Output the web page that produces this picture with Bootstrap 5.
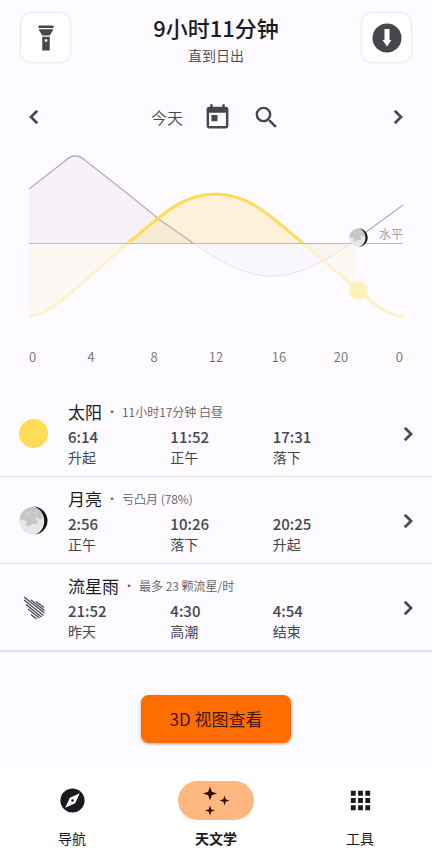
<!DOCTYPE html>
<html lang="zh-CN">
<head>
<meta charset="utf-8">
<meta name="viewport" content="width=device-width, initial-scale=1">
<title>天文学</title>
<link href="https://cdn.jsdelivr.net/npm/bootstrap@5.3.0/dist/css/bootstrap.min.css" rel="stylesheet">
<style>
  body { background: #fdfbff; color: #1b1b1f; font-family: "Noto Sans CJK SC", sans-serif; }
  svg { display: block; flex-shrink: 0; }
  .bare { background: none; border: 0; padding: 0; color: inherit; }
  .ink { color: #46464d; }
  .top-bar { padding: 13px 21px 0; }
  .tile-btn { width: 49px; height: 49px; border-radius: 10px; box-shadow: 0 0 3px rgba(0,0,0,.18); }
  .headline { font-size: 22px; line-height: 28px; font-weight: 500; }
  .subline { font-size: 14px; line-height: 28px; font-weight: 350; }
  .date-bar { padding: 32px 20px 0; }
  .date-tools { gap: 20px; }
  .day-label { font-size: 16px; line-height: 32px; font-weight: 350; }
  .chart-wrap { padding: 12px 29px 22px; }
  .chart-wrap svg { width: 100%; height: auto; overflow: visible; }
  .axis-text { font-size: 13px; fill: #6f6f74; font-weight: 350; }
  .horizon-text { font-size: 12px; fill: #a5a5a9; }
  .body-row { padding: 10px 10px 9px 19px; border-bottom: 1px solid #dcdbdf; color: #46464d; }
  .body-row:hover { color: #46464d; }
  .body-row:last-child { border-bottom: 2px solid #e2e1e5; }
  .body-main { margin-left: 20px; }
  .body-name { font-size: 17px; line-height: 24px; color: #1b1b1f; }
  .body-note { font-size: 12px; color: #5c5c62; font-weight: 350; gap: 4px; margin-left: 4px; }
  .times { margin-top: 3px; line-height: 20px; font-size: 14px; }
  .clock { font-size: 15px; font-weight: 500; }
  .row-arrow { width: 28px; margin-left: 19px; }
  .cta { padding: 43px 0 24px; }
  .view-btn { min-width: 150px; height: 48px; border-radius: 8px; font-size: 17px; color: #43160a; background: #ff6d00; box-shadow: 0 1px 3px rgba(0,0,0,.35); }
  .view-btn:hover { background: #f26700; color: #43160a; }
  .tab-bar { background: #fff; padding: 14px 0 14px; }
  .tab-link { color: #1b1b1f; font-size: 14px; line-height: 22px; gap: 7px; }
  .pill { width: 76px; height: 39px; }
  .pill-on { background: #ffb780; color: #2f0f08; }
</style>
<script src="https://cdn.jsdelivr.net/npm/bootstrap@5.3.0/dist/js/bootstrap.bundle.min.js"></script>
</head>
<body>
<svg width="0" height="0" class="position-absolute" aria-hidden="true">
  <symbol id="next" viewBox="0 0 24 24"><path fill="currentColor" stroke="currentColor" stroke-width=".4" d="M8.59 16.59 10 18l6-6-6-6-1.41 1.41L13.17 12z"/></symbol>
  <symbol id="moon" viewBox="0 0 30 30">
    <circle cx="15" cy="15" r="14.5" fill="#e6e8e7"/>
    <path d="M3 7C6 3 11 .5 16 1.200c3 1 5 3 7 5l1 4-1 4-3-1-2-2-1 2 3 3-2 3-4-1-2 2-3 1-2-2 1-3-4-2-3 1C1 12 1 9 3 7z" fill="#c6c6c7"/>
    <path d="M9 6l3 1-1 3-3 1zM17 5l3 2-1 2-3-1z" fill="#d0d0d0"/>
    <path d="M15 .5C29 4 30 26 16 29.500c8-.5 13.500-7 13.500-14.500S23 .7 15 .5z" fill="#17171b"/>
  </symbol>
</svg>
<div class="d-flex flex-column min-vh-100">
  <header class="top-bar d-flex justify-content-between align-items-start">
    <button type="button" class="tile-btn bare ink d-flex align-items-center justify-content-center bg-white" aria-label="手电筒">
      <svg width="30" height="30" viewBox="0 0 24 24" fill="currentColor"><path d="M9 10 6 5h12l-3 5H9M18 4H6V2h12v2M9 22V11h6v11H9m2-9v2h2v-2z"/></svg>
    </button>
    <div class="text-center">
      <h1 class="headline m-0">9小时11分钟</h1>
      <div class="subline ink">直到日出</div>
    </div>
    <button type="button" class="tile-btn bare ink d-flex align-items-center justify-content-center bg-white" aria-label="下载">
      <svg width="30" height="30" viewBox="0 0 30 30"><circle cx="15" cy="15" r="14.500" fill="currentColor"/><path d="M12.500 6h5v11h2L15 23.500 10.500 17h2z" fill="#fff"/></svg>
    </button>
  </header>

  <div class="date-bar ink d-flex justify-content-between align-items-center">
    <button type="button" class="bare" aria-label="前一天"><svg width="28" height="28" viewBox="0 0 24 24"><path fill="currentColor" stroke="currentColor" stroke-width=".4" d="M15.410 7.410 14 6l-6 6 6 6 1.410-1.410L10.830 12z"/></svg></button>
    <div class="date-tools d-flex align-items-center">
      <span class="day-label">今天</span>
      <button type="button" class="bare" aria-label="选择日期"><svg width="29" height="29" viewBox="0 0 24 24" fill="currentColor"><path d="M7 10h5v5H7m12 4H5V8h14m0-5h-1V1h-2v2H8V1H6v2H5c-1.110 0-2 .9-2 2v14a2 2 0 0 0 2 2h14a2 2 0 0 0 2-2V5a2 2 0 0 0-2-2z"/></svg></button>
      <button type="button" class="bare" aria-label="搜索"><svg width="29" height="29" viewBox="0 0 24 24" fill="currentColor"><path d="M15.500 14h-.79l-.28-.27A6.471 6.471 0 0 0 16 9.500 6.500 6.500 0 1 0 9.500 16c1.610 0 3.090-.59 4.230-1.570l.27.28v.79l5 4.990L20.490 19l-4.990-5zm-6 0C7.010 14 5 11.990 5 9.500S7.010 5 9.500 5 14 7.010 14 9.500 11.990 14 9.500 14z"/></svg></button>
    </div>
    <button type="button" class="bare" aria-label="后一天"><svg width="28" height="28"><use href="#next"/></svg></button>
  </div>

  <div class="chart-wrap">
    <svg viewBox="0 0 374 223" role="img" aria-label="太阳与月亮高度">
      <!-- moon altitude -->
      <path d="M0 44 36 16Q46 6 57 16L99 49 131 75 164 98H0z" fill="#78465a" fill-opacity=".05"/>
      <path d="M164 98C196 120 219 131 242 131 270 131 297 116 322 98z" fill="#78465a" fill-opacity=".02"/>
      <!-- sun altitude -->
      <path d="M0 171C22 171 54 136 99 98H0zM274 98 329 145V98z" fill="#ffc830" fill-opacity=".06"/>
      <path d="M99 98C130 74 150 49 187 49 222 49 245 75 274 98z" fill="#ffc830" fill-opacity=".18"/>
      <path d="M0 44 36 16Q46 6 57 16L99 49 131 75 164 98" fill="none" stroke="#b1afb4" stroke-width="1.200"/>
      <path d="M164 98C196 120 219 131 242 131 270 131 297 116 322 98" fill="none" stroke="#e3e2e4"/>
      <path d="M322 98 374 60" stroke="#b1afb4" stroke-width="1.200"/>
      <path d="M0 171C22 171 54 136 99 98M274 98 329 145C345 159 358 170 374 172" fill="none" stroke="#fff2c8" stroke-width="3"/>
      <path d="M0 98.500H374" stroke="#bdbbbf" fill="none"/>
      <path d="M99 98C130 74 150 49 187 49 222 49 245 75 274 98" fill="none" stroke="#ffdc55" stroke-width="3"/>
      <circle cx="329.500" cy="145.500" r="9.500" fill="#fff0bc"/>
      <use href="#moon" x="320" y="83" width="19" height="19"/>
      <text class="horizon-text" x="374" y="94" text-anchor="end">水平</text>
      <g class="axis-text" text-anchor="middle">
        <text x="0" y="217" text-anchor="start">0</text>
        <text x="62" y="217">4</text>
        <text x="125" y="217">8</text>
        <text x="187" y="217">12</text>
        <text x="250" y="217">16</text>
        <text x="312" y="217">20</text>
        <text x="374" y="217" text-anchor="end">0</text>
      </g>
    </svg>
  </div>

  <main>
    <div>
      <a href="#sun" class="body-row d-flex align-items-center text-decoration-none">
        <svg width="29" height="29" viewBox="0 0 29 29"><circle cx="14.500" cy="14.500" r="14.500" fill="#ffdc55"/></svg>
        <div class="body-main flex-grow-1">
          <div class="body-name d-flex">太阳<span class="body-note d-flex"><span>·</span><span>11小时17分钟 白昼</span></span></div>
          <div class="times row g-0">
            <div class="col"><div class="clock">6:14</div>升起</div>
            <div class="col"><div class="clock">11:52</div>正午</div>
            <div class="col"><div class="clock">17:31</div>落下</div>
          </div>
        </div>
        <svg class="row-arrow" height="28"><use href="#next"/></svg>
      </a>
      <a href="#moon-details" class="body-row d-flex align-items-center text-decoration-none">
        <svg width="29" height="29"><use href="#moon"/></svg>
        <div class="body-main flex-grow-1">
          <div class="body-name d-flex">月亮<span class="body-note d-flex"><span>·</span><span>亏凸月 (78%)</span></span></div>
          <div class="times row g-0">
            <div class="col"><div class="clock">2:56</div>正午</div>
            <div class="col"><div class="clock">10:26</div>落下</div>
            <div class="col"><div class="clock">20:25</div>升起</div>
          </div>
        </div>
        <svg class="row-arrow" height="28"><use href="#next"/></svg>
      </a>
      <a href="#meteors" class="body-row d-flex align-items-center text-decoration-none">
        <svg width="29" height="29" viewBox="0 0 29 29" fill="none" stroke="#46464c" stroke-width="1.200"><path d="M5 4 25.500 20M12 7 25.500 17.500M17 8.500 25 14.500M5 7 24.500 22.500M7 11.500 22.500 24M9 16 20.500 25M12 21.500 17.500 26"/></svg>
        <div class="body-main flex-grow-1">
          <div class="body-name d-flex">流星雨<span class="body-note d-flex"><span>·</span><span>最多 23 颗流星/时</span></span></div>
          <div class="times row g-0">
            <div class="col"><div class="clock">21:52</div>昨天</div>
            <div class="col"><div class="clock">4:30</div>高潮</div>
            <div class="col"><div class="clock">4:54</div>结束</div>
          </div>
        </div>
        <svg class="row-arrow" height="28"><use href="#next"/></svg>
      </a>
    </div>
    <div class="cta text-center">
      <button type="button" class="btn view-btn border-0">3D 视图查看</button>
    </div>
  </main>

  <nav class="tab-bar row g-0 mt-auto" aria-label="主导航">
    <a href="#nav" class="tab-link col d-flex flex-column align-items-center text-decoration-none">
      <span class="pill d-flex align-items-center justify-content-center"><svg width="29" height="29" viewBox="0 0 24 24" fill="currentColor"><path d="M14.190 14.190 6 18l3.810-8.190L18 6M12 2a10 10 0 1 0 0 20 10 10 0 0 0 0-20m0 8.900a1.100 1.100 0 1 0 0 2.200 1.100 1.100 0 0 0 0-2.200z"/></svg></span>
      <span>导航</span>
    </a>
    <a href="#astronomy" class="tab-link col d-flex flex-column align-items-center text-decoration-none" aria-current="page">
      <span class="pill pill-on rounded-pill d-flex align-items-center justify-content-center"><svg width="30" height="30" viewBox="0 0 30 30" fill="currentColor"><path d="M9 0.500 10.800 5.700 16 7.500 10.800 9.300 9 14.500 7.200 9.300 2 7.500 7.200 5.700zM23.500 9.500 24.700 13.300 28.500 14.500 24.700 15.700 23.500 19.500 22.300 15.700 18.500 14.500 22.300 13.300zM9 19.500 10.200 23.300 14 24.500 10.200 25.700 9 29.500 7.800 25.700 4 24.500 7.800 23.300z"/></svg></span>
      <span class="fw-bold">天文学</span>
    </a>
    <a href="#tools" class="tab-link col d-flex flex-column align-items-center text-decoration-none">
      <span class="pill d-flex align-items-center justify-content-center"><svg width="29" height="29" viewBox="0 0 24 24" fill="currentColor"><path d="M4 8h4V4H4v4zm6 12h4v-4h-4v4zm-6 0h4v-4H4v4zm0-6h4v-4H4v4zm6 0h4v-4h-4v4zm6-10v4h4V4h-4zm-6 4h4V4h-4v4zm6 6h4v-4h-4v4zm0 6h4v-4h-4v4z"/></svg></span>
      <span>工具</span>
    </a>
  </nav>
</div>
</body>
</html>
